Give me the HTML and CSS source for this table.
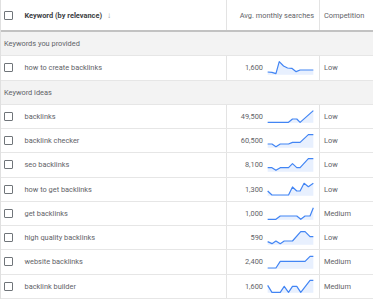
FILE: index.html
```html
<!DOCTYPE html>
<html>
<head>
<meta charset="utf-8">
<link rel="stylesheet" href="styles.css">
</head>
<body>
<div class="table">
  <div class="row head">
    <div class="cell kw"><span class="cb"></span><span class="hd-title">Keyword (by relevance)</span><span class="arrow">↓</span></div>
    <div class="cell num"><span class="hd-light">Avg. monthly searches</span></div>
    <div class="cell comp"><span class="hd-light">Competition</span></div>
  </div>
  <div class="section">Keywords you provided</div>
  <div class="row">
    <div class="cell kw"><span class="cb"></span><span>how to create backlinks</span></div>
    <div class="cell num"><span class="val">1,600</span>
      <svg class="spark" viewBox="260 -20 142 42" preserveAspectRatio="none"><polygon class="area" points="262,13 275,14 287,18 297,-18 310,-5 322,1 335,2 348,12 360,7 400,7 400,21 262,21"/><polyline class="line" points="262,13 275,14 287,18 297,-18 310,-5 322,1 335,2 348,12 360,7 400,7"/></svg>
    </div>
    <div class="cell comp">Low</div>
  </div>
  <div class="section">Keyword ideas</div>
  <div class="row">
    <div class="cell kw"><span class="cb"></span><span>backlinks</span></div>
    <div class="cell num"><span class="val">49,500</span>
      <svg class="spark" viewBox="260 -20 142 42" preserveAspectRatio="none"><polygon class="area" points="262,20 325,20 337,10 350,10 360,20 400,-15 400,21 262,21"/><polyline class="line" points="262,20 325,20 337,10 350,10 360,20 400,-15"/></svg>
    </div>
    <div class="cell comp">Low</div>
  </div>
  <div class="row">
    <div class="cell kw"><span class="cb"></span><span>backlink checker</span></div>
    <div class="cell num"><span class="val">60,500</span>
      <svg class="spark" viewBox="260 -20 142 42" preserveAspectRatio="none"><polygon class="area" points="262,10 275,10 287,18 300,10 325,10 337,5 360,5 385,-18 400,-18 400,21 262,21"/><polyline class="line" points="262,10 275,10 287,18 300,10 325,10 337,5 360,5 385,-18 400,-18"/></svg>
    </div>
    <div class="cell comp">Low</div>
  </div>
  <div class="row">
    <div class="cell kw"><span class="cb"></span><span>seo backlinks</span></div>
    <div class="cell num"><span class="val">8,100</span>
      <svg class="spark" viewBox="260 -20 142 42" preserveAspectRatio="none"><polygon class="area" points="262,9 275,9 287,17 300,9 325,9 337,-3 350,9 360,9 385,-18 400,-18 400,21 262,21"/><polyline class="line" points="262,9 275,9 287,17 300,9 325,9 337,-3 350,9 360,9 385,-18 400,-18"/></svg>
    </div>
    <div class="cell comp">Low</div>
  </div>
  <div class="row">
    <div class="cell kw"><span class="cb"></span><span>how to get backlinks</span></div>
    <div class="cell num"><span class="val">1,300</span>
      <svg class="spark" viewBox="260 -20 142 42" preserveAspectRatio="none"><polygon class="area" points="262,7 275,19 325,19 337,-5 350,7 360,7 372,-16 385,-6 400,-16 400,21 262,21"/><polyline class="line" points="262,7 275,19 325,19 337,-5 350,7 360,7 372,-16 385,-6 400,-16"/></svg>
    </div>
    <div class="cell comp">Low</div>
  </div>
  <div class="row">
    <div class="cell kw"><span class="cb"></span><span>get backlinks</span></div>
    <div class="cell num"><span class="val">1,000</span>
      <svg class="spark" viewBox="260 -20 142 42" preserveAspectRatio="none"><polygon class="area" points="262,20 287,20 300,10 350,10 362,20 375,10 390,10 400,-15 400,21 262,21"/><polyline class="line" points="262,20 287,20 300,10 350,10 362,20 375,10 390,10 400,-15"/></svg>
    </div>
    <div class="cell comp">Medium</div>
  </div>
  <div class="row">
    <div class="cell kw"><span class="cb"></span><span>high quality backlinks</span></div>
    <div class="cell num"><span class="val">590</span>
      <svg class="spark" viewBox="260 -20 142 42" preserveAspectRatio="none"><polygon class="area" points="262,12 275,18 287,10 300,18 312,10 337,10 362,-18 375,-18 390,-3 400,-3 400,21 262,21"/><polyline class="line" points="262,12 275,18 287,10 300,18 312,10 337,10 362,-18 375,-18 390,-3 400,-3"/></svg>
    </div>
    <div class="cell comp">Low</div>
  </div>
  <div class="row">
    <div class="cell kw"><span class="cb"></span><span>website backlinks</span></div>
    <div class="cell num"><span class="val">2,400</span>
      <svg class="spark" viewBox="260 -20 142 42" preserveAspectRatio="none"><polygon class="area" points="262,19 287,19 300,-1 375,-1 390,-16 400,-16 400,21 262,21"/><polyline class="line" points="262,19 287,19 300,-1 375,-1 390,-16 400,-16"/></svg>
    </div>
    <div class="cell comp">Medium</div>
  </div>
  <div class="row">
    <div class="cell kw"><span class="cb"></span><span>backlink builder</span></div>
    <div class="cell num"><span class="val">1,600</span>
      <svg class="spark" viewBox="260 -20 142 42" preserveAspectRatio="none"><polygon class="area" points="262,-1 275,20 300,20 312,2 325,20 337,2 350,2 362,20 390,-16 400,-16 400,21 262,21"/><polyline class="line" points="262,-1 275,20 300,20 312,2 325,20 337,2 350,2 362,20 390,-16 400,-16"/></svg>
    </div>
    <div class="cell comp">Medium</div>
  </div>
</div>
</body>
</html>
```

FILE: styles.css
```css
html, body {
  margin: 0;
  padding: 0;
  background: #ffffff;
}
body {
  font-family: Roboto, "Noto Sans", Arial, sans-serif;
  font-size: 7.4px;
  color: #5f6368;
  width: 373px;
  height: 300px;
  overflow: hidden;
}
.table {
  border-left: 1px solid #e0e0e0;
}
.row {
  display: grid;
  grid-template-columns: 226px 93px 1fr;
  height: 23.25px;
  border-bottom: 1px solid #e6e6e6;
  background: #ffffff;
}
.row.head {
  height: 30px;
  border-bottom: 2px solid #c2c2c2;
}
.cell {
  display: flex;
  align-items: center;
  min-width: 0;
  white-space: nowrap;
}
.cell.kw {
  padding-left: 3px;
  border-right: 1px solid #e3e3e3;
}
.cell.num {
  justify-content: flex-end;
  padding-right: 5px;
  border-right: 1px solid #e3e3e3;
}
.cell.comp {
  padding-left: 4px;
  color: #5f6368;
}
.cb {
  width: 7px;
  height: 7px;
  border: 1.4px solid #70757a;
  border-radius: 1px;
  margin-right: 11.5px;
  flex: none;
}
.hd-title {
  font-weight: 700;
  color: #3c4043;
}
.arrow {
  margin-left: 5px;
  color: #9aa0a6;
  font-size: 8px;
}
.hd-light {
  color: #5f6368;
}
.val {
  color: #5f6368;
  margin-right: 4px;
}
.spark {
  width: 47px;
  height: 14px;
  flex: none;
  overflow: visible;
}
.area {
  fill: #e8f0fe;
  stroke: none;
}
.line {
  fill: none;
  stroke: #4285f4;
  stroke-width: 1.2;
  stroke-linejoin: round;
  vector-effect: non-scaling-stroke;
}
.section {
  height: 23.25px;
  display: flex;
  align-items: center;
  padding-left: 3px;
  background: #f3f3f3;
  border-bottom: 1px solid #e6e6e6;
  color: #5f6368;
}
```
